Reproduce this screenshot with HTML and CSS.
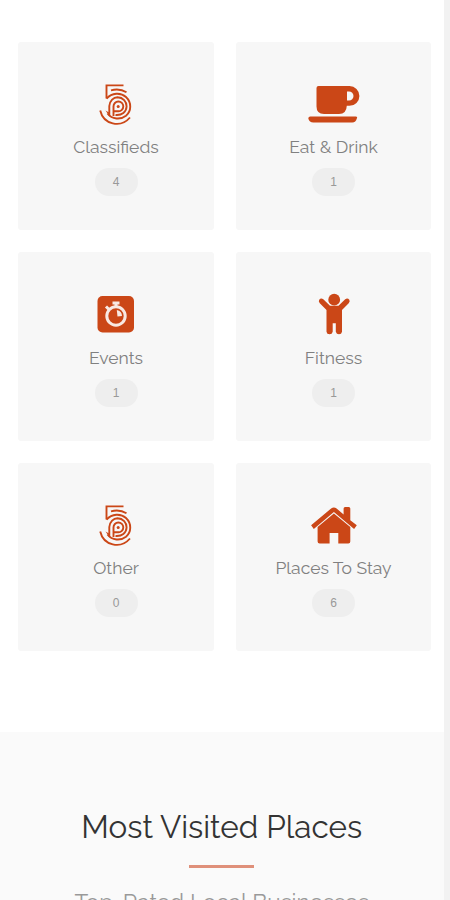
FILE: index.html
```html
<!DOCTYPE html>
<html lang="en">
<head>
<meta charset="utf-8">
<title>Most Visited Places</title>
<link rel="stylesheet" href="styles.css">
</head>
<body>
<svg class="defs" aria-hidden="true">
  <symbol id="five" viewBox="0 0 48 44">
    <g fill="none" stroke="currentColor" stroke-width="1.9">
      <path d="M31.500 3.400H14.500V16.500"/>
      <path d="M19 8.300C25 6.800 30 7.500 34.500 10.200"/>
      <path d="M14.500 16.500C20 10.800 28.500 10 34 15C39.800 20.500 39.500 29 34 33.700C28.500 38 20 37.500 15.500 31.500"/>
      <path d="M8.200 28.500C11.500 42.500 28.500 46.500 38 35.500"/>
      <path d="M17.300 33.500V24C17.800 18.500 21.500 15.300 25.500 15.300C31 15.500 34.700 19.500 34.600 24.500C34.300 30 30 33.600 23.500 33"/>
      <path d="M21.500 34V24.500A4.900 4.900 0 1 1 26.400 29.300H22"/>
    </g>
    <circle cx="26.200" cy="24.500" r="1.500" fill="currentColor"/>
    <path d="M13.500 28.500l4.500 2.500v4z" fill="currentColor"/>
  </symbol>
  <symbol id="cup" viewBox="0 0 48 44">
    <path fill="currentColor" fill-rule="evenodd" d="M6.500 6Q6.500 4 8.500 4H39.500A9.800 9.800 0 0 1 39.500 23.800H36.800Q36.500 32 29 32H14Q6.500 32 6.500 24.500ZM37 9.500V18.500H39A4.500 4.500 0 0 0 39 9.500Z"/>
    <path fill="currentColor" d="M0 34.500H46.500Q48.500 34.500 47.500 36.500Q46.500 40.500 43 40.500H4Q0 40.500-1 36.500Q-1 34.500 1 34.500Z" transform="translate(-.7)"/>
  </symbol>
  <symbol id="timer" viewBox="0 0 48 44">
    <rect x="5.500" y="3" width="36.500" height="36.500" rx="5" fill="currentColor"/>
    <g fill="none" stroke="#f8e9e3">
      <circle cx="24" cy="23" r="9.200" stroke-width="3"/>
      <path d="M20.500 10H27.500M24 9.500V13.500" stroke-width="3"/>
      <path d="M14 13.500L17 16.500" stroke-width="3"/>
    </g>
    <path fill="#f8e9e3" d="M24.800 17A6.200 6.200 0 0 1 30 23L25.500 23.500Z"/>
  </symbol>
  <symbol id="person" viewBox="0 0 48 44">
    <circle cx="24.200" cy="6.700" r="5.900" fill="currentColor"/>
    <path fill="currentColor" transform="translate(0 -.7)" d="M9.200 7.500Q11 5.300 13.300 7L20 13.500H28.500L35.200 7Q37.500 5.300 39.300 7.500Q40.300 9.300 38.700 11L32 17.700V39.500Q31.500 42 29 42T25.800 39.500V31H22.700V39.500Q22.200 42 19.500 42T16.500 39.500V17.700L9.800 11Q8.200 9.300 9.200 7.500Z"/>
  </symbol>
  <symbol id="house" viewBox="0 0 48 44">
    <g fill="currentColor" transform="translate(-.4 -1)">
      <path d="M8 25L24.300 11.500L40.700 25V39.500Q40.700 41.500 38.700 41.500H28.700V31H20V41.500H10Q8 41.500 8 39.500Z"/>
      <path d="M1.500 23.300L21.500 6.600Q24.300 4.500 27 6.600L34 12.500V6.500Q34 5 35.500 5H39.200Q40.700 5 40.700 6.500V18.200L47.200 23.300L44.500 27L24.300 10L4.200 27Z"/>
    </g>
  </symbol>
</svg>
<main class="page">
  <section class="categories">
    <a class="card"><svg class="icon"><use href="#five"/></svg><span class="name">Classifieds</span><span class="count">4</span></a>
    <a class="card"><svg class="icon"><use href="#cup"/></svg><span class="name">Eat &amp; Drink</span><span class="count">1</span></a>
    <a class="card"><svg class="icon"><use href="#timer"/></svg><span class="name">Events</span><span class="count">1</span></a>
    <a class="card"><svg class="icon"><use href="#person"/></svg><span class="name">Fitness</span><span class="count">1</span></a>
    <a class="card"><svg class="icon"><use href="#five"/></svg><span class="name">Other</span><span class="count">0</span></a>
    <a class="card"><svg class="icon"><use href="#house"/></svg><span class="name">Places To Stay</span><span class="count">6</span></a>
  </section>
  <section class="visited">
    <h2 class="title">Most Visited Places</h2>
    <div class="rule"></div>
    <p class="subtitle">Top-Rated Local Businesses</p>
  </section>
</main>
</body>
</html>
```
FILE: styles.css
```css
* { box-sizing: border-box; }
html, body { height: 100%; }
body {
  margin: 0;
  overflow: hidden;
  background: #f2f2f2;
  font-family: Raleway, Lato, sans-serif;
}
.defs { display: none; }
.page {
  display: flex;
  flex-direction: column;
  width: 443.500px;
  height: 900px;
  overflow: hidden;
  background: #fff;
}
.categories {
  display: grid;
  flex: none;
  grid-template-columns: 196px 195px;
  grid-auto-rows: 188.500px;
  gap: 22px;
  height: 732px;
  padding: 41.500px 0 0 18px;
}
.card {
  display: flex;
  flex-direction: column;
  align-items: center;
  padding-top: 40.500px;
  border-radius: 3px;
  background: #f7f7f7;
}
.icon {
  width: 48px;
  height: 44px;
  color: #cb4717;
  overflow: visible;
}
symbol { overflow: visible; }
.name {
  margin-top: 9px;
  color: #808080;
  font-size: 17.500px;
  line-height: 24px;
  white-space: nowrap;
}
.count {
  width: 43px;
  height: 28px;
  margin-top: 9px;
  border-radius: 14px;
  background: #eee;
  color: #999;
  font: 12px/28px "Liberation Sans", sans-serif;
  text-align: center;
}
.visited {
  display: flex;
  flex: 1;
  flex-direction: column;
  align-items: center;
  padding-top: 75px;
  background: #fafafa;
}
.title {
  margin: 0;
  color: #333;
  font-size: 31.400px;
  font-weight: 400;
  line-height: 40px;
  white-space: nowrap;
}
.rule {
  flex: none;
  width: 65px;
  height: 3px;
  margin-top: 18px;
  background: #df907a;
}
.subtitle {
  margin: 20px 0 0;
  color: #999;
  font-size: 22.600px;
  line-height: 28px;
  white-space: nowrap;
}
```
